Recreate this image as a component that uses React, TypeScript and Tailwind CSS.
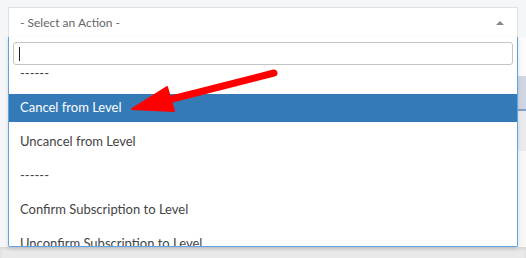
import React from "react";

const OPTIONS = [
  { label: "------" },
  { label: "Cancel from Level", active: true },
  { label: "Uncancel from Level" },
  { label: "------" },
  { label: "Confirm Subscription to Level" },
  { label: "Unconfirm Subscription to Level" },
];

export default function App() {
  return (
    <div
      className="relative w-[526px] h-[258px] overflow-hidden bg-[#f5f6f8] text-[#444]"
      style={{ fontFamily: "Lato, 'Open Sans', sans-serif" }}
    >
      {/* page content behind the dropdown */}
      <div className="flex flex-col h-full">
        <div className="h-[37px]" />
        <div className="h-[39px] flex">
          <div className="w-[518px]" />
          <div className="flex-1 bg-[#fbfbfc]" />
        </div>
        <div className="h-[35px] flex">
          <div className="w-[518px]" />
          <div className="flex-1 bg-[#cdd6e2] border-b-2 border-[#819fc9]" />
        </div>
        <div className="h-[40px] flex">
          <div className="w-[518px]" />
          <div className="flex-1 bg-[#e9ebef]" />
        </div>
        <div className="flex-1 flex">
          <div className="w-[518px]" />
          <div className="flex-1 bg-[#f7f7f8]" />
        </div>
        <div className="h-[11px] bg-[#e9e9ea] shadow-[inset_0_2px_3px_rgba(0,0,0,0.08)]" />
      </div>

      {/* select box */}
      <div className="absolute left-[8px] top-[7px] w-[510px] h-[30px] bg-white border border-[#dde1e8] border-b-0 flex items-center justify-between pl-[11px] pr-[13px]">
        <span className="text-[12px] text-[#666]">- Select an Action -</span>
        <span className="w-0 h-0 border-x-[4px] border-x-transparent border-b-[4px] border-b-[#888]" />
      </div>

      {/* dropdown */}
      <div className="absolute left-[8px] top-[37px] w-[510px] h-[210px] bg-white border border-t-0 border-[#5fa2e6] rounded-b-[2px] shadow-[0_2px_4px_rgba(0,0,0,0.12)] flex flex-col">
        <div className="px-[4px] pt-[5px] pb-[4px]">
          <div className="h-[23px] border border-[#c4c4c4] rounded-[3px] flex items-center pl-[5px]">
            <span className="w-px h-[14px] bg-[#222]" />
          </div>
        </div>
        <div className="flex-1 overflow-hidden">
          <ul className="-mt-[9px] flex flex-col gap-[6px]">
            {OPTIONS.map((o, i) => (
              <li
                key={i}
                className={`h-[28px] flex items-center pl-[11px] text-[13px] ${o.active ? "bg-[#337ab7] text-white" : ""}`}
              >
                {o.label}
              </li>
            ))}
          </ul>
        </div>
      </div>

      {/* red annotation arrow */}
      <svg className="absolute left-0 top-0 pointer-events-none" width="526" height="258">
        <line x1="274" y1="73" x2="168" y2="100" stroke="#ff0000" strokeWidth="7" strokeLinecap="round" />
        <polygon points="132,109 167,87 174,111" fill="#ff0000" stroke="#ff0000" strokeWidth="2" strokeLinejoin="round" />
      </svg>
    </div>
  );
}
